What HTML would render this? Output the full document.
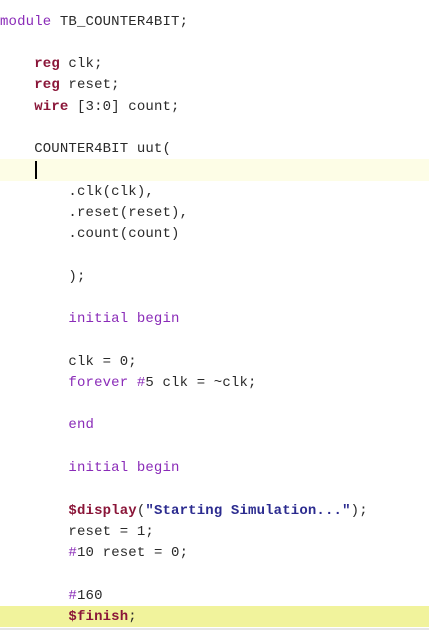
<!DOCTYPE html>
<html><head><meta charset="utf-8"><style>
html,body{margin:0;padding:0;background:#fff;width:429px;height:630px;overflow:hidden;position:relative}
.w{position:absolute;left:0;top:1px;width:429px;height:630px}
.l{position:absolute;left:0;height:21px;line-height:21px;font-family:"Liberation Mono","Courier New",monospace;font-size:14px;letter-spacing:0.15px;color:#2a2a2a;white-space:pre;width:429px}
.k{color:#8a1538;font-weight:bold}
.p{color:#8a2bb8}
.s{color:#2b2b8f;font-weight:bold}
.hl1{position:absolute;left:0;top:159px;width:429px;height:22px;background:#fdfde6}
.hl2{position:absolute;left:0;top:606px;width:429px;height:21px;background:#f1f39c}
.cur{position:absolute;left:35px;top:161px;width:2px;height:18px;background:#000}
.bot{position:absolute;left:0;top:628px;width:429px;height:2px;background:#e6e6e6}
</style></head><body>
<div class="hl1"></div><div class="hl2"></div><div class="cur"></div><div class="bot"></div>
<div class="w">
<div class="l" style="top:11px"><span class="p">module</span> TB_COUNTER4BIT;</div>
<div class="l" style="top:53px">    <span class="k">reg</span> clk;</div>
<div class="l" style="top:74px">    <span class="k">reg</span> reset;</div>
<div class="l" style="top:96px">    <span class="k">wire</span> [3:0] count;</div>
<div class="l" style="top:138px">    COUNTER4BIT uut(</div>
<div class="l" style="top:181px">        .clk(clk),</div>
<div class="l" style="top:202px">        .reset(reset),</div>
<div class="l" style="top:223px">        .count(count)</div>
<div class="l" style="top:266px">        );</div>
<div class="l" style="top:308px">        <span class="p">initial begin</span></div>
<div class="l" style="top:351px">        clk = 0;</div>
<div class="l" style="top:372px">        <span class="p">forever #</span>5 clk = ~clk;</div>
<div class="l" style="top:414px">        <span class="p">end</span></div>
<div class="l" style="top:457px">        <span class="p">initial begin</span></div>
<div class="l" style="top:500px">        <span class="k">$display</span>(<span class="s">"Starting Simulation..."</span>);</div>
<div class="l" style="top:521px">        reset = 1;</div>
<div class="l" style="top:542px">        <span class="p">#</span>10 reset = 0;</div>
<div class="l" style="top:585px">        <span class="p">#</span>160</div>
<div class="l" style="top:606px">        <span class="k">$finish</span>;</div>
</div>
</body></html>
